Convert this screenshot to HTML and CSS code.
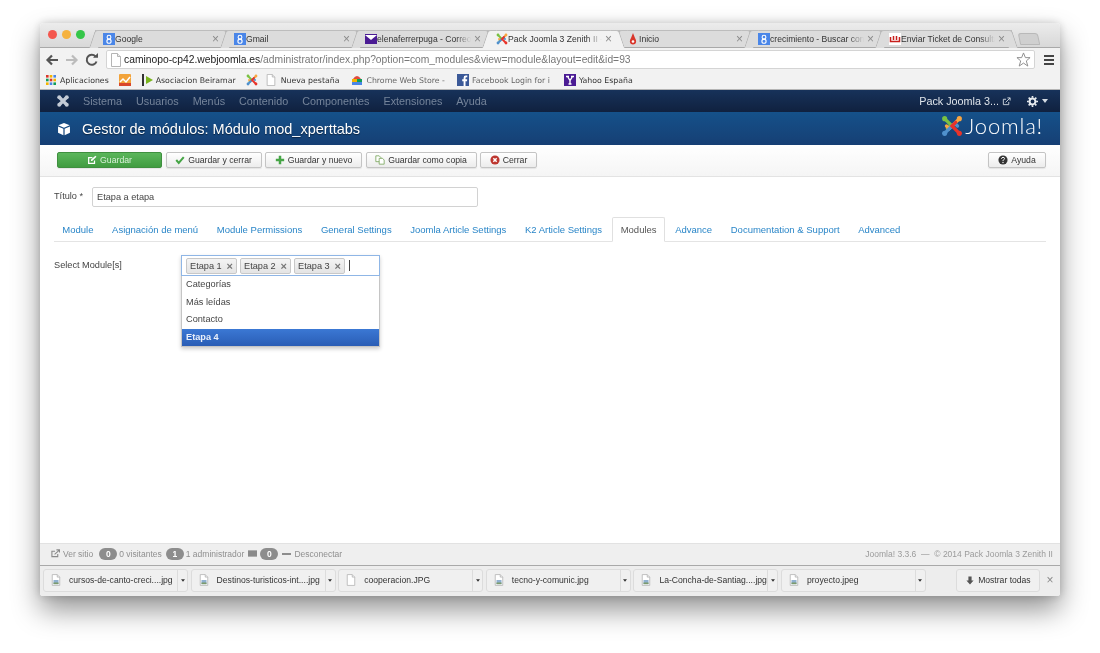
FILE: index.html
```html
<!DOCTYPE html>
<html lang="en">
<head>
    <meta charset="UTF-8">
    <title>Gestor de módulos</title>
    <link rel="stylesheet" href="styles.css">
</head>
<body>
    <!-- Shared icons -->
    <svg class="icon-sheet" width="0" height="0">
        <symbol id="joomla" viewBox="0 0 24 24">
            <path d="M5 5 L11 11 L7 15" fill="none" stroke="#7ac143" stroke-width="3.6" stroke-linecap="round"/>
            <path d="M19 5 L9 15 L6 12" fill="none" stroke="#f9a541" stroke-width="3.6" stroke-linecap="round"/>
            <path d="M5 19 L15 9 L18 12" fill="none" stroke="#5091cd" stroke-width="3.6" stroke-linecap="round"/>
            <path d="M19 19 L12 12 L16 8" fill="none" stroke="#e8332a" stroke-width="3.6" stroke-linecap="round"/>
            <circle cx="4" cy="4" r="2.8" fill="#7ac143"/>
            <circle cx="20" cy="4" r="2.8" fill="#f9a541"/>
            <circle cx="4" cy="20" r="2.8" fill="#5091cd"/>
            <circle cx="20" cy="20" r="2.8" fill="#e8332a"/>
        </symbol>
        <symbol id="google" viewBox="0 0 12 12">
            <rect width="12" height="12" fill="#4a86e8"/>
            <circle cx="6" cy="4.2" r="1.9" fill="none" stroke="#fff" stroke-width="1.1"/>
            <circle cx="6" cy="8.2" r="2.1" fill="none" stroke="#fff" stroke-width="1.1"/>
        </symbol>
        <symbol id="page" viewBox="0 0 12 14">
            <path d="M1.5 .5 H7.5 L10.5 3.5 V13.5 H1.5 Z" fill="#fff" stroke="#b5b5b5"/>
            <path d="M7.5 .5 V3.5 H10.5" fill="#eee" stroke="#b5b5b5"/>
        </symbol>
        <symbol id="jpg" viewBox="0 0 12 14">
            <path d="M1.5 .5 H7.5 L10.5 3.5 V13.5 H1.5 Z" fill="#fff" stroke="#b5b5b5"/>
            <path d="M7.5 .5 V3.5 H10.5" fill="#eee" stroke="#b5b5b5"/>
            <rect x="3" y="7" width="6" height="5" fill="#8fb0cf"/>
            <rect x="3" y="10" width="6" height="2" fill="#7d9a6b"/>
        </symbol>
        <symbol id="caret" viewBox="0 0 6 4">
            <path d="M0 0 H6 L3 4 Z" fill="#333"/>
        </symbol>
    </svg>

    <div class="window">
        <!-- Browser tabs -->
        <div class="tabstrip">
            <div class="traffic">
                <span class="light red"></span>
                <span class="light yellow"></span>
                <span class="light green"></span>
            </div>
            <div class="tab">
                <svg class="favicon"><use href="#google"/></svg>
                <span class="tab-title">Google</span>
                <span class="tab-close">×</span>
            </div>
            <div class="tab">
                <svg class="favicon"><use href="#google"/></svg>
                <span class="tab-title">Gmail</span>
                <span class="tab-close">×</span>
            </div>
            <div class="tab">
                <svg class="favicon" viewBox="0 0 12 12"><rect width="12" height="10" y="1" fill="#4b1c94"/><path d="M0 2 L6 7 L12 2 Z" fill="#fff"/></svg>
                <span class="tab-title">elenaferrerpuga - Correo</span>
                <span class="tab-close">×</span>
            </div>
            <div class="tab active">
                <svg class="favicon"><use href="#joomla"/></svg>
                <span class="tab-title">Pack Joomla 3 Zenith II -</span>
                <span class="tab-close">×</span>
            </div>
            <div class="tab">
                <svg class="favicon" viewBox="0 0 12 12"><path d="M6 0 L8 5 Q10 8 8.5 10.5 Q6 12.5 3.5 10.5 Q2 8 4 5 Z" fill="#d9362b"/><circle cx="6" cy="8.5" r="1.3" fill="#fff"/></svg>
                <span class="tab-title">Inicio</span>
                <span class="tab-close">×</span>
            </div>
            <div class="tab">
                <svg class="favicon"><use href="#google"/></svg>
                <span class="tab-title">crecimiento - Buscar con</span>
                <span class="tab-close">×</span>
            </div>
            <div class="tab">
                <svg class="favicon" viewBox="0 0 12 12"><rect width="12" height="12" fill="#fff"/><path d="M1.5 4 V8.5 H10.5 V4 M4.5 3 V7 M7.5 3 V7" fill="none" stroke="#c8201c" stroke-width="1.5"/></svg>
                <span class="tab-title">Enviar Ticket de Consulta</span>
                <span class="tab-close">×</span>
            </div>
            <div class="new-tab"></div>
        </div>

        <!-- Address bar -->
        <div class="addressbar">
            <svg class="nav-icon" viewBox="0 0 14 14"><path d="M13 7 H3 M7 2.5 L2.5 7 L7 11.5" fill="none" stroke="#555" stroke-width="2.2"/></svg>
            <svg class="nav-icon" viewBox="0 0 14 14"><path d="M1 7 H11 M7 2.5 L11.5 7 L7 11.5" fill="none" stroke="#bcbcbc" stroke-width="2.2"/></svg>
            <svg class="nav-icon" viewBox="0 0 14 14"><path d="M11.5 8.5 A5 5 0 1 1 10.5 3.5" fill="none" stroke="#555" stroke-width="2"/><path d="M8 4.8 H13 V0 Z" fill="#555"/></svg>
            <div class="url-box">
                <svg class="url-page"><use href="#page"/></svg>
                <span class="url"><b>caminopo-cp42.webjoomla.es</b>/administrator/index.php?option=com_modules&amp;view=module&amp;layout=edit&amp;id=93</span>
                <svg class="star" viewBox="0 0 16 16"><path d="M8 1 L10 6 H15 L11 9.5 L12.6 15 L8 11.8 L3.4 15 L5 9.5 L1 6 H6 Z" fill="#fff" stroke="#8a8a8a"/></svg>
            </div>
            <div class="burger"><span></span><span></span><span></span></div>
        </div>

        <!-- Bookmarks -->
        <div class="bookmarks">
            <div class="bookmark">
                <svg class="favicon" viewBox="0 0 12 12">
                    <rect x="1" y="1" width="2.6" height="2.6" fill="#d9362b"/><rect x="4.7" y="1" width="2.6" height="2.6" fill="#f4b400"/><rect x="8.4" y="1" width="2.6" height="2.6" fill="#4a86e8"/>
                    <rect x="1" y="4.7" width="2.6" height="2.6" fill="#0f9d58"/><rect x="4.7" y="4.7" width="2.6" height="2.6" fill="#d9362b"/><rect x="8.4" y="4.7" width="2.6" height="2.6" fill="#f4b400"/>
                    <rect x="1" y="8.4" width="2.6" height="2.6" fill="#f4b400"/><rect x="4.7" y="8.4" width="2.6" height="2.6" fill="#4a86e8"/><rect x="8.4" y="8.4" width="2.6" height="2.6" fill="#0f9d58"/>
                </svg>
                Aplicaciones
            </div>
            <div class="bookmark">
                <svg class="favicon" viewBox="0 0 12 12"><rect width="12" height="12" rx="1" fill="#f2a33a"/><path d="M1 8 L4 5 L7 8 L11 3" fill="none" stroke="#fff" stroke-width="1.5"/><path d="M0 9 H12 V12 H0 Z" fill="#d9462b"/></svg>
            </div>
            <div class="bookmark">
                <svg class="favicon" viewBox="0 0 12 12"><rect x="1" y="0" width="2" height="12" fill="#333"/><path d="M5 2 L12 6 L5 10 Z" fill="#7ab51d"/></svg>
                Asociacion Beiramar
            </div>
            <div class="bookmark">
                <svg class="favicon"><use href="#joomla"/></svg>
                <svg class="favicon page-mark"><use href="#page"/></svg>
                Nueva pestaña
            </div>
            <div class="bookmark store">
                <svg class="favicon" viewBox="0 0 12 12"><path d="M2 5 Q6 -1 10 5 Z" fill="#e04a3f"/><rect x="1" y="5" width="10" height="6" fill="#4a86e8"/><rect x="1" y="5" width="5" height="3" fill="#f4b400"/><rect x="6" y="5" width="5" height="3" fill="#0f9d58"/></svg>
                <span class="fade">Chrome Web Store -</span>
            </div>
            <div class="bookmark fb">
                <svg class="favicon" viewBox="0 0 12 12"><rect width="12" height="12" fill="#3b5998"/><path d="M8.5 12 V7.2 H10 L10.2 5.3 H8.5 V4.2 Q8.5 3.3 9.4 3.3 H10.3 V1.6 H8.8 Q6.6 1.6 6.6 4 V5.3 H5.2 V7.2 H6.6 V12 Z" fill="#fff"/></svg>
                <span class="fade">Facebook Login for i</span>
            </div>
            <div class="bookmark yahoo">
                <svg class="favicon" viewBox="0 0 12 12"><rect width="12" height="12" fill="#4b1c94"/><path d="M2 2.5 H5 M7 2.5 H10 M3.5 2.5 L6 6.5 L8.5 2.5 M6 6.5 V10 M4.5 10 H7.5" fill="none" stroke="#fff" stroke-width="1.4"/></svg>
                Yahoo España
            </div>
        </div>

        <!-- Joomla admin navbar -->
        <div class="navbar">
            <svg class="nav-logo" viewBox="0 0 24 24">
                <path d="M5 5 L19 19 M19 5 L5 19" stroke="#c3cbd6" stroke-width="6.5"/>
                <circle cx="4.5" cy="4.5" r="4" fill="#c3cbd6"/><circle cx="19.5" cy="4.5" r="4" fill="#c3cbd6"/>
                <circle cx="4.5" cy="19.5" r="4" fill="#c3cbd6"/><circle cx="19.5" cy="19.5" r="4" fill="#c3cbd6"/>
            </svg>
            <ul class="menu">
                <li>Sistema</li>
                <li>Usuarios</li>
                <li>Menús</li>
                <li>Contenido</li>
                <li>Componentes</li>
                <li>Extensiones</li>
                <li>Ayuda</li>
            </ul>
            <div class="nav-right">
                <span class="site-name">Pack Joomla 3...</span>
                <svg class="small-icon" viewBox="0 0 10 10"><path d="M7.5 5.5 V8.5 H1.5 V2.5 H4.5 M4 6 L9 1 M6 1 H9 V4" fill="none" stroke="#d5dbe3"/></svg>
                <svg class="gear" viewBox="0 0 12 12"><circle cx="6" cy="6" r="3.2" fill="none" stroke="#e8ecf0" stroke-width="2.2"/><path d="M6 0 V12 M0 6 H12 M1.8 1.8 L10.2 10.2 M10.2 1.8 L1.8 10.2" stroke="#e8ecf0" stroke-width="1.8" stroke-dasharray="2 8 2 0"/></svg>
                <svg class="nav-caret" viewBox="0 0 6 4"><path d="M0 0 H6 L3 4 Z" fill="#d5dbe3"/></svg>
            </div>
        </div>

        <!-- Page header -->
        <div class="page-header">
            <svg class="cube" viewBox="0 0 16 16"><path d="M8 1 L14.5 3.8 L8 6.6 L1.5 3.8 Z M1.2 5 L7.3 7.7 V15 L1.2 12.2 Z M14.8 5 L8.7 7.7 V15 L14.8 12.2 Z" fill="#fff"/></svg>
            <h1>Gestor de módulos: Módulo mod_xperttabs</h1>
            <div class="brand">
                <svg class="brand-mark"><use href="#joomla"/></svg>
                <span class="brand-name">Joomla!</span>
            </div>
        </div>

        <!-- Action buttons -->
        <div class="toolbar">
            <button class="btn btn-save">
                <svg class="btn-icon" viewBox="0 0 12 12"><path d="M9 6.5 V10 H2 V3 H6.5" fill="none" stroke="#fff" stroke-width="1.5"/><path d="M4.5 7.5 L5 5.5 L10 .8 L11.3 2 L6.5 7 Z" fill="#fff"/></svg>
                Guardar
            </button>
            <button class="btn btn-close-save">
                <svg class="btn-icon" viewBox="0 0 12 12"><path d="M1.5 6 L4.5 9.5 L10.5 2.5" fill="none" stroke="#46a546" stroke-width="2.4"/></svg>
                Guardar y cerrar
            </button>
            <button class="btn btn-new">
                <svg class="btn-icon" viewBox="0 0 12 12"><path d="M6 1 V11 M1 6 H11" stroke="#46a546" stroke-width="3"/></svg>
                Guardar y nuevo
            </button>
            <button class="btn btn-copy">
                <svg class="btn-icon" viewBox="0 0 12 12"><path d="M1 1 H5 L7 3 V8 H1 Z" fill="#fff" stroke="#7aa55c"/><path d="M5 4 H9 L11 6 V11 H5 Z" fill="#fff" stroke="#7aa55c"/></svg>
                Guardar como copia
            </button>
            <button class="btn btn-cancel">
                <svg class="btn-icon" viewBox="0 0 12 12"><circle cx="6" cy="6" r="5.5" fill="#bd362f"/><path d="M4 4 L8 8 M8 4 L4 8" stroke="#fff" stroke-width="1.8"/></svg>
                Cerrar
            </button>
            <button class="btn btn-help">
                <svg class="btn-icon" viewBox="0 0 12 12"><circle cx="6" cy="6" r="5.5" fill="#333"/><path d="M4.2 4.6 Q4.4 2.8 6 2.8 Q7.8 2.8 7.8 4.3 Q7.8 5.3 6.6 5.8 Q6 6.1 6 7.2" fill="none" stroke="#fff" stroke-width="1.2"/><circle cx="6" cy="9" r=".8" fill="#fff"/></svg>
                Ayuda
            </button>
        </div>

        <!-- Form -->
        <div class="content">
            <div class="title-row">
                <label class="title-label">Título *</label>
                <div class="title-input">Etapa a etapa</div>
            </div>

            <ul class="tabs">
                <li>Module</li>
                <li>Asignación de menú</li>
                <li>Module Permissions</li>
                <li>General Settings</li>
                <li>Joomla Article Settings</li>
                <li>K2 Article Settings</li>
                <li class="current">Modules</li>
                <li>Advance</li>
                <li>Documentation &amp; Support</li>
                <li>Advanced</li>
            </ul>

            <div class="select-row">
                <label class="select-label">Select Module[s]</label>
                <div class="chosen">
                    <div class="chosen-choices">
                        <span class="choice">Etapa 1 <i>×</i></span>
                        <span class="choice">Etapa 2 <i>×</i></span>
                        <span class="choice">Etapa 3 <i>×</i></span>
                        <span class="cursor"></span>
                    </div>
                    <ul class="chosen-results">
                        <li>Categorías</li>
                        <li>Más leídas</li>
                        <li>Contacto</li>
                        <li class="highlighted">Etapa 4</li>
                    </ul>
                </div>
            </div>
        </div>

        <!-- Status footer -->
        <div class="statusbar">
            <svg class="status-icon" viewBox="0 0 10 10"><path d="M7.5 5.5 V8.5 H1 V2.5 H4.5 M4 6 L9 1.5 M6 1 H9.5 V4" fill="none" stroke="#8a8a8a" stroke-width="1.2"/></svg>
            <span class="status-link">Ver sitio</span>
            <span class="badge first">0</span>
            <span>0 visitantes</span>
            <span class="badge">1</span>
            <span>1 administrador</span>
            <svg class="status-icon mail" viewBox="0 0 10 8"><rect width="10" height="7" y=".5" fill="#8a8a8a"/></svg>
            <span class="badge tight">0</span>
            <span class="dash"></span>
            <span>Desconectar</span>
            <span class="version">Joomla! 3.3.6 &nbsp;—&nbsp; © 2014 Pack Joomla 3 Zenith II</span>
        </div>

        <!-- Downloads shelf -->
        <div class="downloads">
            <div class="download">
                <svg class="file-icon"><use href="#jpg"/></svg>
                <span class="file-name">cursos-de-canto-creci....jpg</span>
                <span class="file-menu"><svg class="file-caret"><use href="#caret"/></svg></span>
            </div>
            <div class="download">
                <svg class="file-icon"><use href="#jpg"/></svg>
                <span class="file-name">Destinos-turisticos-int....jpg</span>
                <span class="file-menu"><svg class="file-caret"><use href="#caret"/></svg></span>
            </div>
            <div class="download">
                <svg class="file-icon"><use href="#page"/></svg>
                <span class="file-name">cooperacion.JPG</span>
                <span class="file-menu"><svg class="file-caret"><use href="#caret"/></svg></span>
            </div>
            <div class="download">
                <svg class="file-icon"><use href="#jpg"/></svg>
                <span class="file-name">tecno-y-comunic.jpg</span>
                <span class="file-menu"><svg class="file-caret"><use href="#caret"/></svg></span>
            </div>
            <div class="download">
                <svg class="file-icon"><use href="#jpg"/></svg>
                <span class="file-name">La-Concha-de-Santiag....jpg</span>
                <span class="file-menu"><svg class="file-caret"><use href="#caret"/></svg></span>
            </div>
            <div class="download">
                <svg class="file-icon"><use href="#jpg"/></svg>
                <span class="file-name">proyecto.jpeg</span>
                <span class="file-menu"><svg class="file-caret"><use href="#caret"/></svg></span>
            </div>
            <div class="show-all">
                <svg class="show-icon" viewBox="0 0 10 10"><path d="M3 0 H7 V5 H9.5 L5 10 L.5 5 H3 Z" fill="#555"/></svg>
                Mostrar todas
            </div>
            <span class="shelf-close">×</span>
        </div>
    </div>
</body>
</html>
```

FILE: styles.css
```css
/* Basic Styling */
* {
    box-sizing: border-box;
}

body {
    margin: 0;
    height: 653px;
    padding: 23px 40px 57px;
    background-color: #fff;
    font-family: "Liberation Sans", Arial, sans-serif;
    overflow: hidden;
}

ul {
    list-style: none;
    margin: 0;
    padding: 0;
}

.icon-sheet {
    position: absolute;
}

.window {
    height: 573px;
    display: flex;
    flex-direction: column;
    border-radius: 4px 4px 3px 3px;
    background-color: #fff;
    box-shadow: 0 14px 28px rgba(0, 0, 0, 0.42), 0 0 10px rgba(0, 0, 0, 0.18);
    overflow: hidden;
    filter: blur(0.35px);
}

/* Browser tabs */
.tabstrip {
    height: 25px;
    flex: none;
    display: flex;
    align-items: flex-end;
    padding-left: 7px;
    background: linear-gradient(#ececec, #d8d8d8);
    border-bottom: 1px solid #a9a9a9;
}

.traffic {
    width: 48px;
    flex: none;
    align-self: flex-start;
    display: flex;
    gap: 5px;
    padding-top: 7px;
    padding-left: 1px;
}

.light {
    width: 9px;
    height: 9px;
    border-radius: 50%;
}

.red { background-color: #f4574e; }
.yellow { background-color: #f5b23f; }
.green { background-color: #35c649; }

.tab {
    position: relative;
    width: 131px;
    height: 18px;
    margin-bottom: -1px;
    flex: none;
    display: flex;
    align-items: center;
    padding: 0 7px 0 8px;
    font-size: 8.6px;
    color: #333;
    background-color: #dcdcdc;
    border-top: 1px solid #bdbdbd;
    border-bottom: 1px solid #a9a9a9;
}

.tab::before,
.tab::after {
    content: "";
    position: absolute;
    top: -1px;
    bottom: -1px;
    width: 8px;
    background-color: #dcdcdc;
    border-top: 1px solid #bdbdbd;
}

.tab::before {
    left: -3px;
    transform: skewX(-18deg);
    border-left: 1px solid #b3b3b3;
    border-radius: 3px 0 0 0;
}

.tab::after {
    right: -3px;
    transform: skewX(18deg);
    border-right: 1px solid #b3b3b3;
    border-radius: 0 3px 0 0;
}

.tab.active,
.tab.active::before,
.tab.active::after {
    background-color: #f2f2f2;
    border-bottom-color: #f2f2f2;
    z-index: 2;
}

.tab .favicon {
    position: relative;
    z-index: 1;
}

.tab-title {
    position: relative;
    z-index: 1;
    flex: 1;
    min-width: 0;
    white-space: nowrap;
    -webkit-mask-image: linear-gradient(90deg, #000 84%, transparent);
    mask-image: linear-gradient(90deg, #000 84%, transparent);
}

.tab-close {
    position: relative;
    z-index: 1;
    margin-left: 3px;
    font-size: 12px;
    color: #8b8b8b;
}

.favicon {
    width: 12px;
    height: 12px;
    flex: none;
}

.new-tab {
    width: 20px;
    height: 12px;
    margin: 0 0 2px 7px;
    border-radius: 3px 3px 1px 1px;
    background-color: #d0d0d0;
    border: 1px solid #b9b9b9;
    transform: skewX(12deg);
}

/* Address bar */
.addressbar {
    height: 23px;
    flex: none;
    display: flex;
    align-items: center;
    padding: 0 6px 0 5px;
    gap: 6px;
    background-color: #f2f2f2;
}

.nav-icon {
    width: 14px;
    height: 14px;
    flex: none;
}

.url-box {
    flex: 1;
    height: 19px;
    margin-left: 1px;
    display: flex;
    align-items: center;
    padding: 0 3px;
    background-color: #fff;
    border: 1px solid #d4d4d4;
    border-radius: 2px;
}

.url-page {
    width: 12px;
    height: 14px;
    margin-right: 2px;
    flex: none;
}

.url {
    flex: 1;
    font-size: 10.3px;
    color: #787878;
    white-space: nowrap;
}

.url b {
    font-weight: normal;
    color: #222;
}

.star {
    width: 15px;
    height: 15px;
    flex: none;
}

.burger {
    width: 10px;
    margin-left: 3px;
    flex: none;
    display: flex;
    flex-direction: column;
    gap: 2px;
}

.burger span {
    height: 2px;
    background-color: #444;
}

/* Bookmarks */
.bookmarks {
    height: 19px;
    flex: none;
    display: flex;
    align-items: center;
    padding-left: 5px;
    gap: 10px;
    font-family: "DejaVu Sans", sans-serif;
    font-size: 7.8px;
    color: #333;
    background-color: #f2f2f2;
    border-bottom: 1px solid #b5b5b5;
}

.bookmark {
    display: flex;
    align-items: center;
    gap: 3px;
    white-space: nowrap;
}

.page-mark {
    margin-left: 4px;
    margin-right: 1px;
}

.store {
    margin-left: 2px;
}

.fb {
    margin-left: 2px;
}

.yahoo {
    margin-left: 4px;
}

.fade {
    opacity: 0.75;
}

/* Joomla admin navbar */
.navbar {
    height: 22px;
    flex: none;
    display: flex;
    align-items: center;
    padding: 0 12px 0 17px;
    background: linear-gradient(#17325a, #10213f);
}

.nav-logo {
    width: 12px;
    height: 12px;
    flex: none;
}

.menu {
    display: flex;
    gap: 14px;
    margin-left: 14px;
    font-size: 10.8px;
    color: #75849a;
}

.nav-right {
    margin-left: auto;
    display: flex;
    align-items: center;
    font-size: 10.8px;
    color: #dfe4ea;
}

.small-icon {
    width: 9px;
    height: 9px;
    margin-left: 3px;
}

.gear {
    width: 11px;
    height: 11px;
    margin-left: 16px;
}

.nav-caret {
    width: 6px;
    height: 4px;
    margin-left: 4px;
}

/* Page header */
.page-header {
    height: 33px;
    flex: none;
    display: flex;
    align-items: center;
    padding: 0 17px;
    background: linear-gradient(#15518a, #163f74);
    color: #fff;
}

.cube {
    width: 14px;
    height: 14px;
    flex: none;
}

.page-header h1 {
    margin: 0 0 0 11px;
    font-size: 14.5px;
    font-weight: normal;
    text-shadow: 0 1px 1px rgba(0, 0, 0, 0.5);
}

.brand {
    margin-left: auto;
    margin-top: -5px;
    display: flex;
    align-items: center;
    gap: 2px;
}

.brand-mark {
    width: 22px;
    height: 22px;
    flex: none;
}

.brand-name {
    font-family: Lato, sans-serif;
    font-weight: 300;
    font-size: 22px;
    letter-spacing: 0.8px;
    line-height: 20px;
}

/* Action buttons */
.toolbar {
    height: 32px;
    flex: none;
    display: flex;
    align-items: center;
    padding: 0 14px 1px 17px;
    gap: 3.5px;
    background: linear-gradient(#fff, #f5f5f5);
    border-bottom: 1px solid #e3e3e3;
}

.btn {
    height: 16px;
    display: flex;
    align-items: center;
    justify-content: center;
    gap: 3px;
    padding: 0;
    font-family: "Liberation Sans", Arial, sans-serif;
    font-size: 8.7px;
    color: #333;
    background: linear-gradient(#fff, #ececec);
    border: 1px solid #c4c4c4;
    border-radius: 2px;
    box-shadow: 0 1px 1px rgba(0, 0, 0, 0.08);
}

.btn-icon {
    width: 10px;
    height: 10px;
    flex: none;
}

.btn-save {
    width: 105px;
    color: #d8efd8;
    background: linear-gradient(#5bb65b, #409c40);
    border-color: #3f8f3f;
}

.btn-close-save { width: 96px; }
.btn-new { width: 97px; }
.btn-copy { width: 111px; }
.btn-cancel { width: 57px; }

.btn-help {
    width: 58px;
    margin-left: auto;
}

/* Form */
.content {
    flex: 1;
    padding: 10px 14px 0;
    font-size: 9.2px;
    color: #444;
    background-color: #fff;
}

.title-row {
    display: flex;
    align-items: flex-start;
}

.title-label {
    width: 38px;
    padding-top: 4px;
    flex: none;
}

.title-input {
    width: 386px;
    height: 20px;
    padding: 0 4px;
    line-height: 19px;
    border: 1px solid #d2d2d2;
    border-radius: 2px;
}

.tabs {
    height: 25px;
    margin-top: 10px;
    display: flex;
    gap: 2px;
    border-bottom: 1px solid #e4e4e4;
    font-size: 9.5px;
    color: #2a86c8;
}

.tabs li {
    height: 25px;
    padding: 0 7.3px;
    line-height: 24px;
    border: 1px solid transparent;
    white-space: nowrap;
}

.tabs .current {
    color: #555;
    background-color: #fff;
    border-color: #e0e0e0 #e0e0e0 #fff;
    border-radius: 2px 2px 0 0;
}

.select-row {
    margin-top: 13px;
    display: flex;
    align-items: flex-start;
}

.select-label {
    width: 127px;
    padding-top: 5px;
    flex: none;
}

.chosen {
    width: 199px;
    flex: none;
    box-shadow: 0 2px 4px rgba(0, 0, 0, 0.2);
}

.chosen-choices {
    height: 21px;
    display: flex;
    align-items: center;
    gap: 3px;
    padding: 0 3px 0 4px;
    border: 1px solid #8fb6e6;
}

.choice {
    width: 51px;
    height: 16px;
    display: flex;
    align-items: center;
    justify-content: space-between;
    padding: 0 3px;
    background: linear-gradient(#f4f4f4, #e4e4e4);
    border: 1px solid #c8c8c8;
    border-radius: 2px;
}

.choice i {
    font-style: normal;
    font-size: 11px;
    font-weight: bold;
    color: #777;
}

.cursor {
    width: 1px;
    height: 11px;
    margin-left: 1px;
    background-color: #444;
}

.chosen-results {
    border: 1px solid #c5c5c5;
    border-top: none;
}

.chosen-results li {
    height: 17.5px;
    padding-left: 4px;
    line-height: 17px;
}

.chosen-results .highlighted {
    font-weight: bold;
    color: #eaf0fa;
    background: linear-gradient(#3b78d4, #2a5db5);
}

/* Status footer */
.statusbar {
    height: 23px;
    flex: none;
    display: flex;
    align-items: center;
    padding: 0 7px 2px 11px;
    font-size: 8.5px;
    color: #8f8f8f;
    background-color: #efefef;
    border-top: 1px solid #e2e2e2;
    border-bottom: 1px solid #a9a9a9;
    white-space: nowrap;
}

.status-icon {
    width: 9px;
    height: 9px;
    flex: none;
}

.status-icon.mail {
    margin-left: 4px;
}

.status-link {
    margin-left: 3px;
}

.badge {
    width: 18px;
    height: 12px;
    margin: 0 2px 0 4px;
    border-radius: 6px;
    text-align: center;
    line-height: 12px;
    font-weight: bold;
    color: #fff;
    background-color: #8d8d8d;
}

.badge.first {
    margin-left: 6px;
}

.badge.tight {
    margin-left: 3px;
}

.dash {
    width: 9px;
    height: 2px;
    margin: 0 3px 0 2px;
    background-color: #8d8d8d;
}

.version {
    margin-left: auto;
    color: #9b9b9b;
}

/* Downloads shelf */
.downloads {
    height: 30px;
    flex: none;
    display: flex;
    align-items: center;
    padding: 0 3px 2px 3px;
    gap: 2.6px;
    font-size: 8.6px;
    color: #333;
    background-color: #ededed;
}

.download {
    width: 145px;
    height: 23px;
    flex: none;
    display: flex;
    align-items: center;
    padding-left: 7px;
    border: 1px solid #dcdcdc;
    border-radius: 3px;
    background-color: #f0f0f0;
}

.file-icon {
    width: 10px;
    height: 12px;
    flex: none;
}

.file-name {
    flex: 1;
    margin-left: 8px;
    white-space: nowrap;
}

.file-menu {
    width: 10px;
    height: 100%;
    flex: none;
    display: flex;
    align-items: center;
    justify-content: center;
    border-left: 1px solid #dcdcdc;
}

.file-caret {
    width: 4px;
    height: 3px;
}

.show-all {
    width: 84px;
    height: 23px;
    margin-left: auto;
    flex: none;
    display: flex;
    align-items: center;
    justify-content: center;
    gap: 4px;
    border: 1px solid #dcdcdc;
    border-radius: 3px;
    background-color: #f0f0f0;
}

.show-icon {
    width: 8px;
    height: 9px;
}

.shelf-close {
    width: 14px;
    text-align: center;
    font-size: 12px;
    color: #8b8b8b;
}
```
